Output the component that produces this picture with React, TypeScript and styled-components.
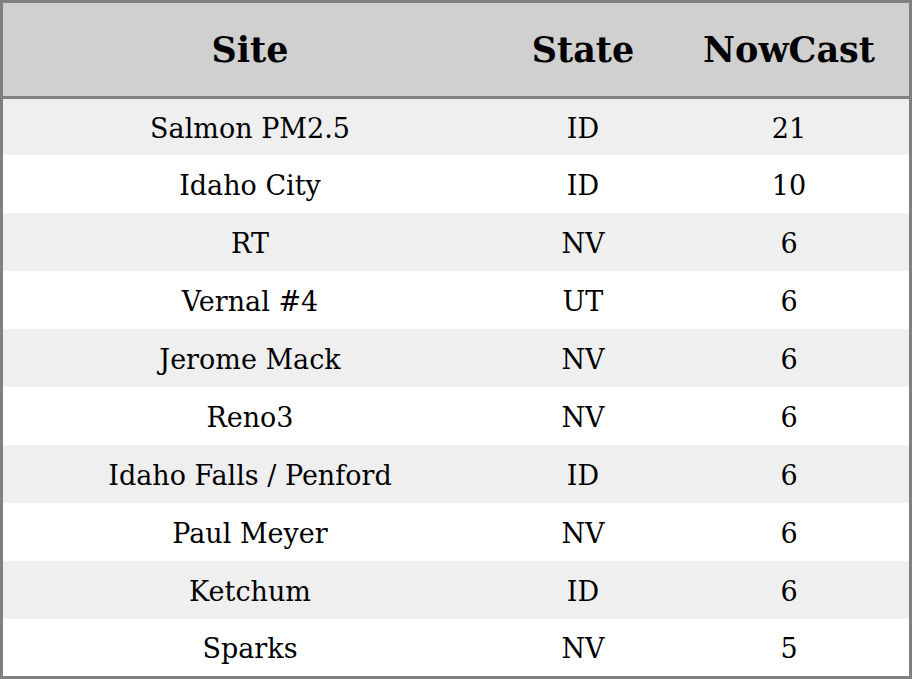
import React from 'react';
import styled, { createGlobalStyle } from 'styled-components';

const GlobalStyle = createGlobalStyle`
  html, body {
    margin: 0;
    padding: 0;
    background: #ffffff;
  }
  body {
    font-family: "DejaVu Serif", "Liberation Serif", serif;
    color: #000000;
  }
`;

const Table = styled.div`
  box-sizing: border-box;
  width: 912px;
  height: 679px;
  border: 3px solid #808080;
  display: grid;
  grid-template-columns: 494px 172px 240px;
  grid-template-rows: 96px 56px repeat(8, 58px) 57px;
  overflow: hidden;
`;

const HeaderCell = styled.div`
  display: flex;
  align-items: center;
  justify-content: center;
  background: #d0d0d0;
  border-bottom: 3px solid #808080;
  font-weight: bold;
  font-size: 35px;
`;

const Cell = styled.div<{ $striped: boolean }>`
  box-sizing: border-box;
  display: flex;
  align-items: center;
  justify-content: center;
  padding-top: 2px;
  background: ${p => (p.$striped ? '#efefef' : '#ffffff')};
  font-size: 27px;
`;

type Site = { name: string; state: string; nowcast: number };

const sites: Site[] = [
  { name: 'Salmon PM2.5', state: 'ID', nowcast: 21 },
  { name: 'Idaho City', state: 'ID', nowcast: 10 },
  { name: 'RT', state: 'NV', nowcast: 6 },
  { name: 'Vernal #4', state: 'UT', nowcast: 6 },
  { name: 'Jerome Mack', state: 'NV', nowcast: 6 },
  { name: 'Reno3', state: 'NV', nowcast: 6 },
  { name: 'Idaho Falls / Penford', state: 'ID', nowcast: 6 },
  { name: 'Paul Meyer', state: 'NV', nowcast: 6 },
  { name: 'Ketchum', state: 'ID', nowcast: 6 },
  { name: 'Sparks', state: 'NV', nowcast: 5 }
];

function App() {
  return (
    <>
      <GlobalStyle />
      <Table>
        <HeaderCell>Site</HeaderCell>
        <HeaderCell>State</HeaderCell>
        <HeaderCell>NowCast</HeaderCell>
        {sites.map((site, index) => (
          <React.Fragment key={site.name}>
            <Cell $striped={index % 2 === 0}>{site.name}</Cell>
            <Cell $striped={index % 2 === 0}>{site.state}</Cell>
            <Cell $striped={index % 2 === 0}>{site.nowcast}</Cell>
          </React.Fragment>
        ))}
      </Table>
    </>
  );
}

export default App;
